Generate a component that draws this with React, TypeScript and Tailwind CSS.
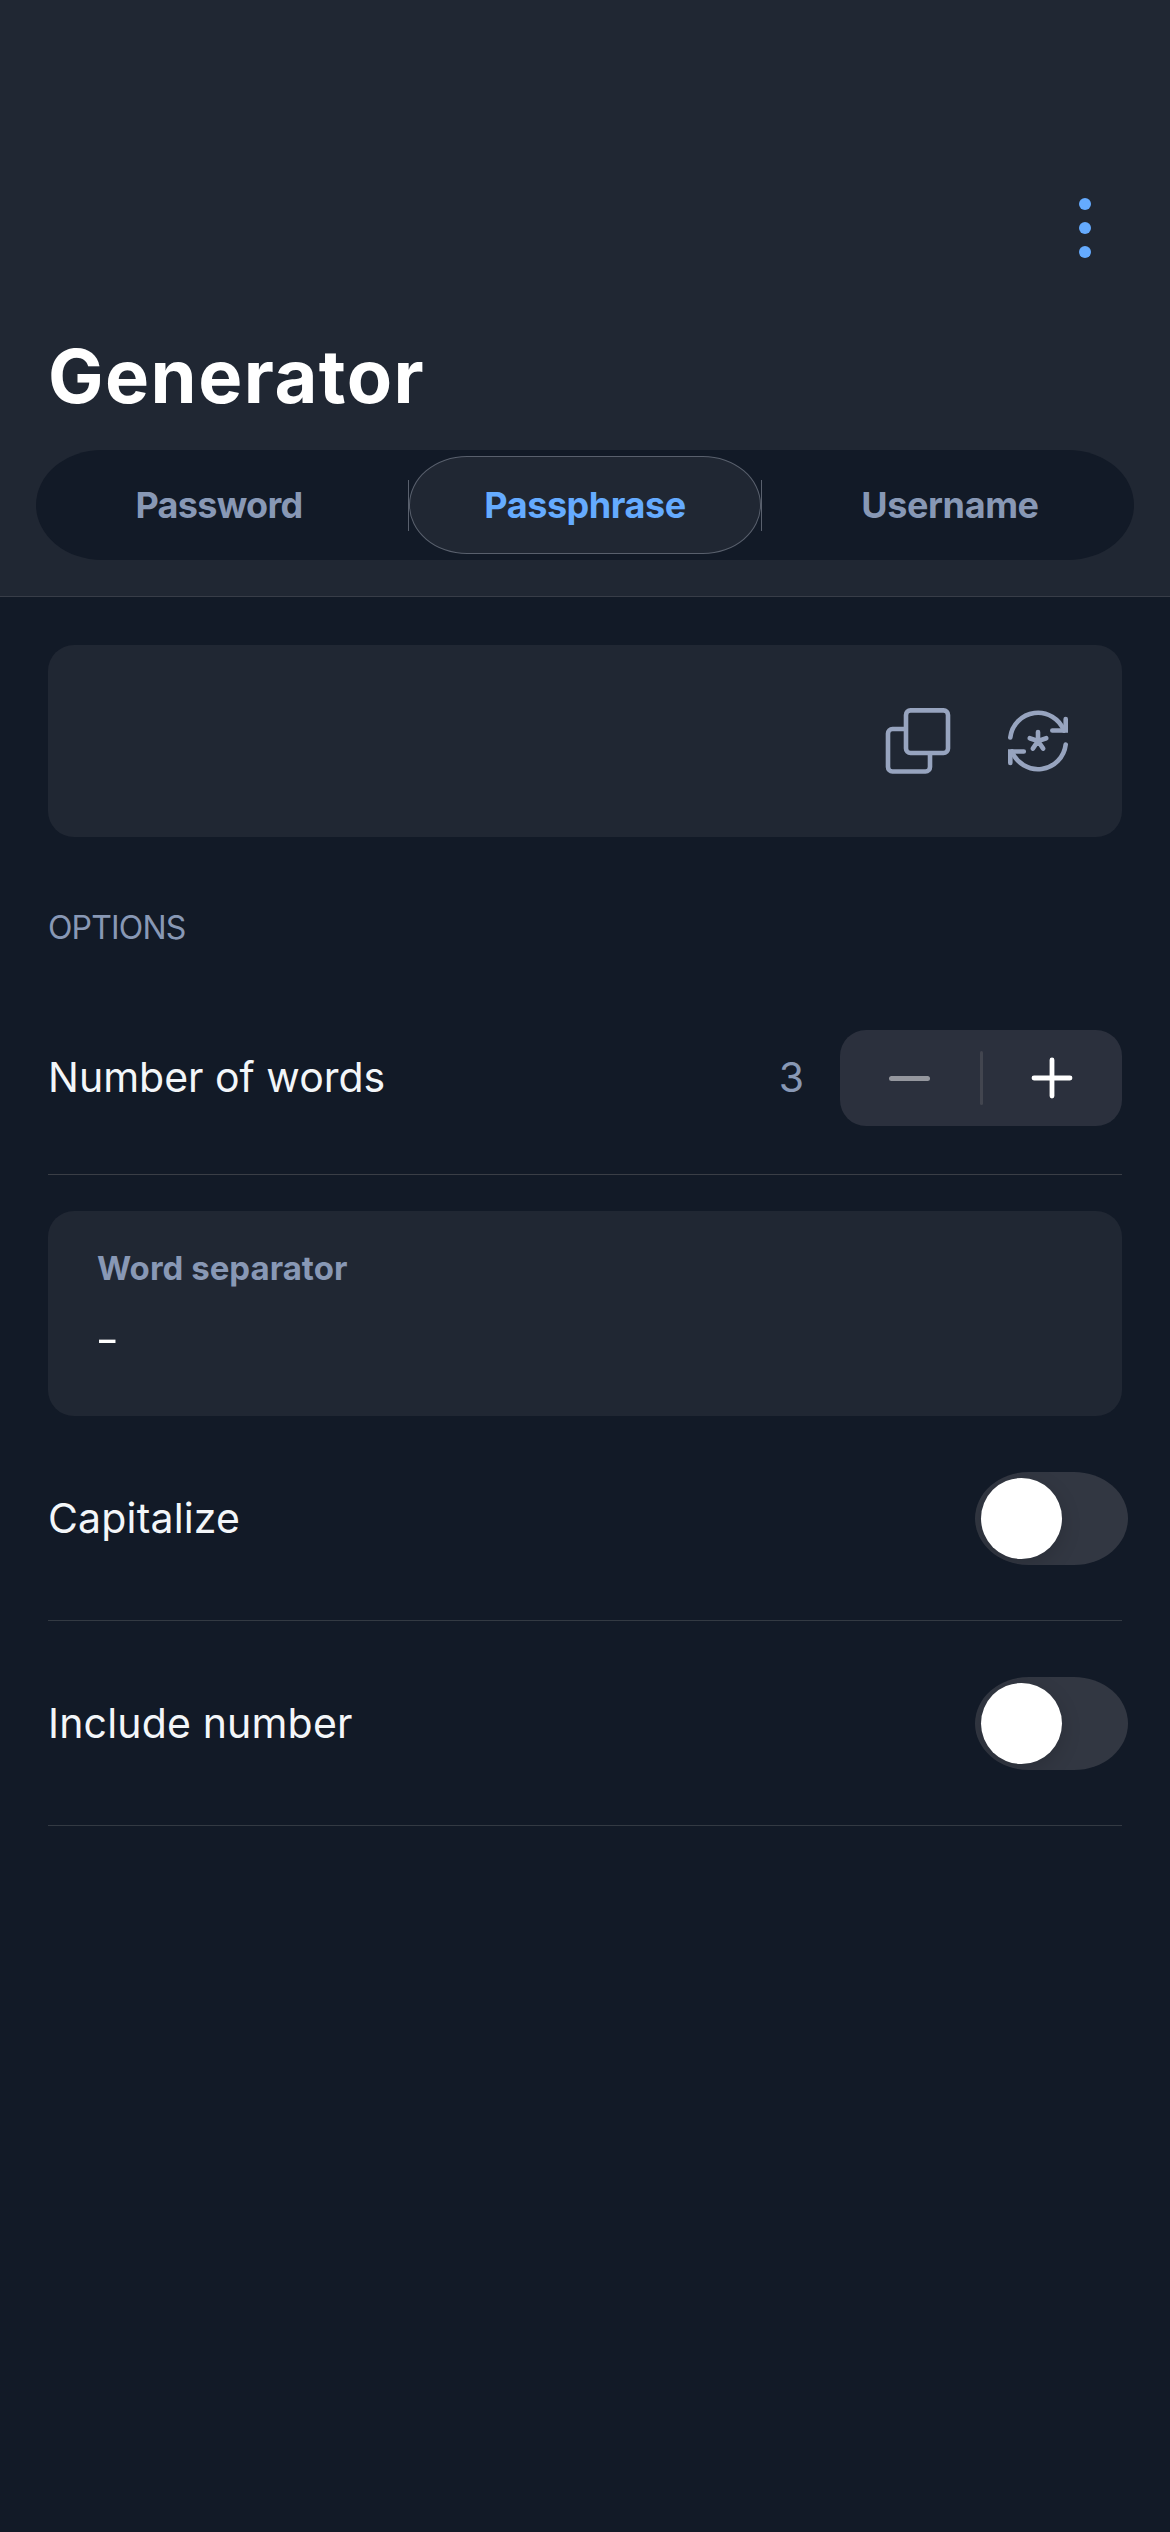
function CopyIcon() {
  return (
    <svg viewBox="0 0 72 72" className="size-[72px]" fill="none" stroke="#97A4BF" strokeWidth="4.6">
      <rect x="24" y="5.4" width="42" height="42.6" rx="4.5" />
      <path d="M24 24H10.5A4.5 4.5 0 0 0 6 28.500V62A4.500 4.500 0 0 0 10.500 66.500H43.500A4.500 4.500 0 0 0 48 62V48" />
    </svg>
  );
}

function RegenerateIcon() {
  return (
    <svg viewBox="0 0 72 72" className="size-[72px]" fill="none" stroke="#97A4BF" strokeWidth="4.6" strokeLinecap="round">
      <path d="M8.300 32.500A27.900 27.900 0 0 1 62 25.500" />
      <path d="M63.700 14V25.500H50.300" strokeLinejoin="miter" />
      <path d="M63.700 39.500A27.900 27.900 0 0 1 10 46.500" />
      <path d="M8.300 58V46.500H21.800" strokeLinejoin="miter" />
      <path d="M36 36V27M36 36L27.700 33.200M36 36L44.300 33.200M36 36L30.800 43.600M36 36L41.200 43.600" />
    </svg>
  );
}

function Toggle() {
  return (
    <button
      role="switch"
      aria-checked="false"
      className="-mr-[6px] flex h-[93px] w-[153px] overflow-hidden rounded-[54px/46.5px] bg-[#323742] p-[6px]"
    >
      <span className="size-[81px] rounded-full bg-white shadow-[0_6px_20px_rgba(0,0,0,0.15)]" />
    </button>
  );
}

function ToggleRow({ label }: { label: string }) {
  return (
    <div className="flex h-[205px] items-center justify-between border-b border-[#333A43]">
      <span className="text-[41px] leading-[48px] tracking-[0.17px]">{label}</span>
      <Toggle />
    </div>
  );
}

export default function App() {
  return (
    <div className="h-[2532px] w-[1170px] overflow-hidden bg-[#121A27] font-['Inter',sans-serif] text-[#F3F6F9]">
      <header className="h-[597px] border-b border-[#383D48] bg-[#202733] pt-[198px]">
        <div className="flex justify-end pr-[79px]">
          <button aria-label="More" className="flex flex-col gap-3">
            <span className="size-3 rounded-full bg-[#65ABFF]" />
            <span className="size-3 rounded-full bg-[#65ABFF]" />
            <span className="size-3 rounded-full bg-[#65ABFF]" />
          </button>
        </div>
        <h1 className="mt-[78px] ml-[48px] text-[74px] leading-[80px] font-bold tracking-[1.5px] text-white">
          Generator
        </h1>
        <div className="mx-[36px] mt-[34px] flex h-[110px] items-center rounded-[66px/55px] bg-[#121A27] text-[36px] font-bold text-[#8898B5]">
          <div className="w-[372px] pr-[6px] text-center tracking-[-0.7px]">Password</div>
          <div className="h-[51px] w-px bg-[#59606D]" />
          <div className="flex h-[98px] w-[352px] items-center justify-center rounded-[58px/49px] border-[1.5px] border-[#59606D] bg-[#202733] tracking-[-0.45px] text-[#65ABFF]">
            Passphrase
          </div>
          <div className="h-[51px] w-px bg-[#59606D]" />
          <div className="flex-1 pl-[4px] text-center tracking-[-0.4px]">Username</div>
        </div>
      </header>

      <main className="px-[48px] pt-[48px]">
        <section className="flex h-[192px] items-center justify-end gap-12 rounded-[26px] bg-[#202733] pr-[48px]">
          <CopyIcon />
          <RegenerateIcon />
        </section>

        <h2 className="mt-[71px] text-[32px] leading-[40px] tracking-[-0.85px] text-[#8898B5]">OPTIONS</h2>

        <div className="mt-[82px] flex h-[145px] items-start border-b border-[#3A3E46]">
          <div className="flex h-[95px] flex-1 items-center justify-between pr-[36px] text-[41px]">
            <span>Number of words</span>
            <span className="text-[#8898B5]">3</span>
          </div>
          <div className="flex h-[96px] w-[282px] items-center rounded-[26px] bg-[#2B303D]">
            <button aria-label="Decrease" className="flex flex-1 justify-center">
              <span className="h-[5px] w-[41px] rounded-full bg-[#95979E]" />
            </button>
            <span className="h-[54px] w-[3px] rounded-full bg-[#42454F]" />
            <button aria-label="Increase" className="flex flex-1 justify-center">
              <svg viewBox="0 0 42 42" className="size-[42px]" stroke="white" strokeWidth="4.800" strokeLinecap="round">
                <path d="M21 3V39M3 21H39" />
              </svg>
            </button>
          </div>
        </div>

        <section className="mt-[36px] h-[205px] rounded-[26px] bg-[#202733] px-[48px] pt-[35px]">
          <div className="ml-px text-[33px] leading-[44px] font-bold tracking-[0.02px] text-[#8898B5]">
            Word separator
          </div>
          <div className="mt-[19px] -ml-px text-[54px] leading-[60px] font-light text-white">-</div>
        </section>

        <ToggleRow label="Capitalize" />
        <ToggleRow label="Include number" />
      </main>
    </div>
  );
}
